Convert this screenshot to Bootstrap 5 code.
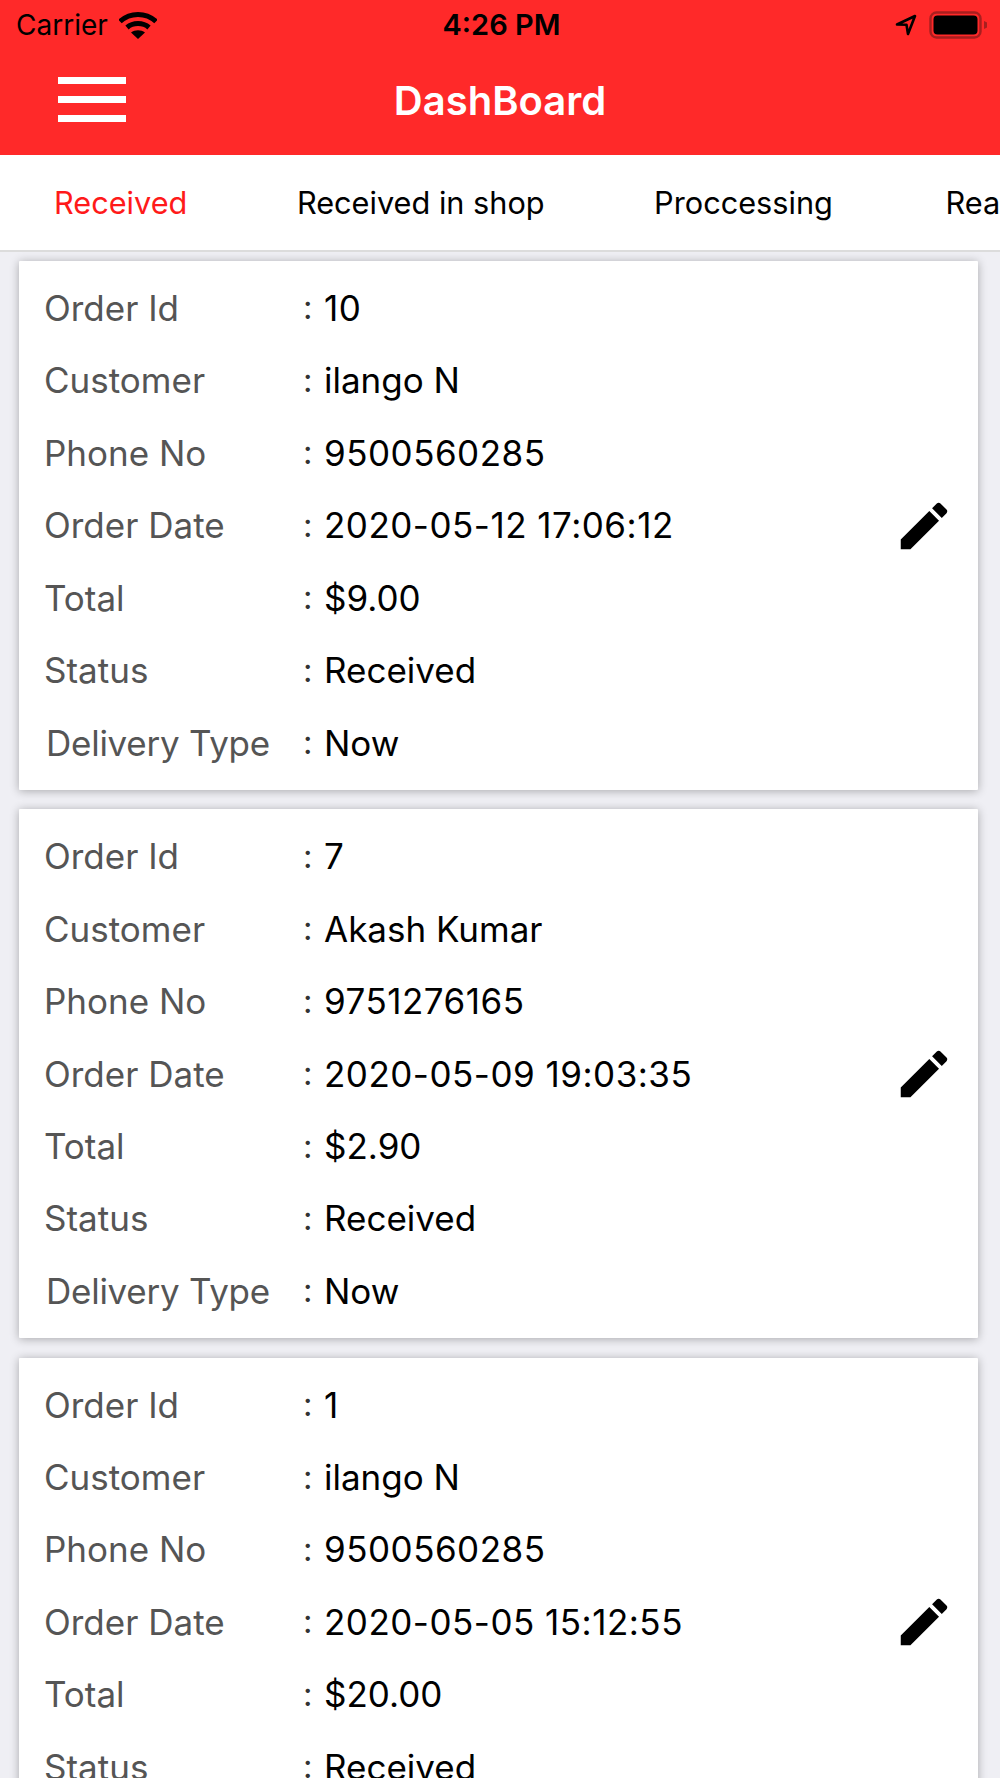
<!DOCTYPE html>
<html lang="en">
<head>
<meta charset="utf-8">
<title>DashBoard</title>
<link href="https://cdn.jsdelivr.net/npm/bootstrap@5.3.0/dist/css/bootstrap.min.css" rel="stylesheet">
<style>
html, body { height: 100%; overflow: hidden; }
body { background: #efeff4; font-family: Inter, "Liberation Sans", sans-serif; }
.top-zone { background: #ff2929; height: 155px; }
.status-strip { height: 50px; padding: 0 13px 0 16px; color: #000; }
.status-side { flex: 1 1 0; }
.status-right { gap: 12px; }
.carrier-text { font-size: 28px; margin-right: 11px; }
.clock-text { font-size: 29px; font-weight: 600; }
.head-row { height: 105px; padding: 0 0 0 58px; position: relative; }
.burger { width: 68px; height: 45px; gap: 12px; margin-top: -6px; }
.burger span { height: 7px; background: #fff; display: block; }
.head-title { color: #fff; font-size: 40px; font-weight: 600; position: absolute; left: 0; right: 0; top: 30px; text-align: center; line-height: 42px; }
.tab-strip { height: 97px; background: #fff; border-bottom: 2px solid #dcdcdc; padding-left: 54px; flex-wrap: nowrap; gap: 109.5px; overflow: hidden; }
.tab-strip .nav-link { padding: 0; font-size: 30.7px; color: #000; white-space: nowrap; line-height: 95px; }
.tab-strip .nav-link.active { color: #ff1a1a; }
.tab-strip .nav-link:last-child { margin-left: 3px; }
.order-zone { padding: 9px 22px 0 19px; gap: 19.25px; }
.order-card { border: 0; border-radius: 1px; box-shadow: 0 1px 10px rgba(0,0,0,.3); padding: 11px 27px 11px 25px; background: #fff; flex-shrink: 0; }
.info-row { height: 72.45px; font-size: 35px; color: #000; }
.num-value { letter-spacing: .5px; }
.info-label { width: 259px; color: #555; flex-shrink: 0; }
.info-label.shifted { padding-left: 2px; letter-spacing: -.25px; }
.info-colon { width: 21px; color: #333; flex-shrink: 0; font-size: 33px; }
.pencil-icon { width: 62px; height: 62px; flex-shrink: 0; margin-right: -4px; }
</style>
</head>
<body>
<header class="top-zone">
  <div class="status-strip d-flex align-items-center">
    <div class="status-side d-flex align-items-center">
      <span class="carrier-text">Carrier</span>
      <svg width="38" height="28" viewBox="0 0 38 28" aria-hidden="true"><g fill="none" stroke="#000" stroke-width="5"><path d="M1 10.5C11 1 27 1 37 10.5"/><path d="M8 16.5C14 11.3 24 11.3 30 16.5"/></g><path d="M12 21.5C16 18.5 22 18.5 26 21.5L19 28Z" fill="#000"/></svg>
    </div>
    <div class="clock-text">4:26 PM</div>
    <div class="status-side status-right d-flex align-items-center justify-content-end">
      <svg width="22" height="22" viewBox="0 0 22 22" aria-hidden="true"><path d="M2 10.5L20 2L13 20L11.5 10.8Z" fill="none" stroke="#000" stroke-width="2.6" stroke-linejoin="round"/></svg>
      <svg width="58" height="28" viewBox="0 0 58 28" aria-hidden="true"><rect x="1.5" y="1.5" width="50" height="25" rx="6" fill="none" stroke="#a81f1f" stroke-width="2.4"/><rect x="4.5" y="4.5" width="44" height="19" rx="4" fill="#000"/><path d="M55 10L58 11.5V16.5L55 18Z" fill="#a81f1f"/></svg>
    </div>
  </div>
  <div class="head-row d-flex align-items-center">
    <div class="burger d-flex flex-column"><span></span><span></span><span></span></div>
    <div class="head-title">DashBoard</div>
  </div>
</header>
<nav class="nav tab-strip align-items-center">
  <a class="nav-link active" href="#">Received</a>
  <a class="nav-link" href="#">Received in shop</a>
  <a class="nav-link" href="#">Proccessing</a>
  <a class="nav-link" href="#">Ready</a>
</nav>
<main class="order-zone d-flex flex-column">
  <section class="card order-card flex-row align-items-center">
    <div class="flex-grow-1">
      <div class="info-row d-flex align-items-center"><span class="info-label">Order Id</span><span class="info-colon">:</span><span class="num-value">10</span></div>
      <div class="info-row d-flex align-items-center"><span class="info-label">Customer</span><span class="info-colon">:</span><span>ilango N</span></div>
      <div class="info-row d-flex align-items-center"><span class="info-label">Phone No</span><span class="info-colon">:</span><span class="num-value">9500560285</span></div>
      <div class="info-row d-flex align-items-center"><span class="info-label">Order Date</span><span class="info-colon">:</span><span class="num-value">2020-05-12 17:06:12</span></div>
      <div class="info-row d-flex align-items-center"><span class="info-label">Total</span><span class="info-colon">:</span><span>$9.00</span></div>
      <div class="info-row d-flex align-items-center"><span class="info-label">Status</span><span class="info-colon">:</span><span>Received</span></div>
      <div class="info-row d-flex align-items-center"><span class="info-label shifted">Delivery Type</span><span class="info-colon">:</span><span>Now</span></div>
    </div>
    <svg class="pencil-icon" viewBox="0 0 24 24" aria-hidden="true"><path d="M3 17.25V21h3.75L17.81 9.94l-3.75-3.75L3 17.25zM20.71 7.04c.39-.39.39-1.02 0-1.41l-2.34-2.34c-.39-.39-1.02-.39-1.41 0l-1.83 1.83 3.75 3.75 1.83-1.83z"/></svg>
  </section>
  <section class="card order-card flex-row align-items-center">
    <div class="flex-grow-1">
      <div class="info-row d-flex align-items-center"><span class="info-label">Order Id</span><span class="info-colon">:</span><span class="num-value">7</span></div>
      <div class="info-row d-flex align-items-center"><span class="info-label">Customer</span><span class="info-colon">:</span><span>Akash Kumar</span></div>
      <div class="info-row d-flex align-items-center"><span class="info-label">Phone No</span><span class="info-colon">:</span><span class="num-value">9751276165</span></div>
      <div class="info-row d-flex align-items-center"><span class="info-label">Order Date</span><span class="info-colon">:</span><span class="num-value">2020-05-09 19:03:35</span></div>
      <div class="info-row d-flex align-items-center"><span class="info-label">Total</span><span class="info-colon">:</span><span>$2.90</span></div>
      <div class="info-row d-flex align-items-center"><span class="info-label">Status</span><span class="info-colon">:</span><span>Received</span></div>
      <div class="info-row d-flex align-items-center"><span class="info-label shifted">Delivery Type</span><span class="info-colon">:</span><span>Now</span></div>
    </div>
    <svg class="pencil-icon" viewBox="0 0 24 24" aria-hidden="true"><path d="M3 17.25V21h3.75L17.81 9.94l-3.75-3.75L3 17.25zM20.71 7.04c.39-.39.39-1.02 0-1.41l-2.34-2.34c-.39-.39-1.02-.39-1.41 0l-1.83 1.83 3.75 3.75 1.83-1.83z"/></svg>
  </section>
  <section class="card order-card flex-row align-items-center">
    <div class="flex-grow-1">
      <div class="info-row d-flex align-items-center"><span class="info-label">Order Id</span><span class="info-colon">:</span><span class="num-value">1</span></div>
      <div class="info-row d-flex align-items-center"><span class="info-label">Customer</span><span class="info-colon">:</span><span>ilango N</span></div>
      <div class="info-row d-flex align-items-center"><span class="info-label">Phone No</span><span class="info-colon">:</span><span class="num-value">9500560285</span></div>
      <div class="info-row d-flex align-items-center"><span class="info-label">Order Date</span><span class="info-colon">:</span><span class="num-value">2020-05-05 15:12:55</span></div>
      <div class="info-row d-flex align-items-center"><span class="info-label">Total</span><span class="info-colon">:</span><span>$20.00</span></div>
      <div class="info-row d-flex align-items-center"><span class="info-label">Status</span><span class="info-colon">:</span><span>Received</span></div>
      <div class="info-row d-flex align-items-center"><span class="info-label shifted">Delivery Type</span><span class="info-colon">:</span><span>Now</span></div>
    </div>
    <svg class="pencil-icon" viewBox="0 0 24 24" aria-hidden="true"><path d="M3 17.25V21h3.75L17.81 9.94l-3.75-3.75L3 17.25zM20.71 7.04c.39-.39.39-1.02 0-1.41l-2.34-2.34c-.39-.39-1.02-.39-1.41 0l-1.83 1.83 3.75 3.75 1.83-1.83z"/></svg>
  </section>
</main>
<script src="https://cdn.jsdelivr.net/npm/bootstrap@5.3.0/dist/js/bootstrap.bundle.min.js"></script>
</body>
</html>
